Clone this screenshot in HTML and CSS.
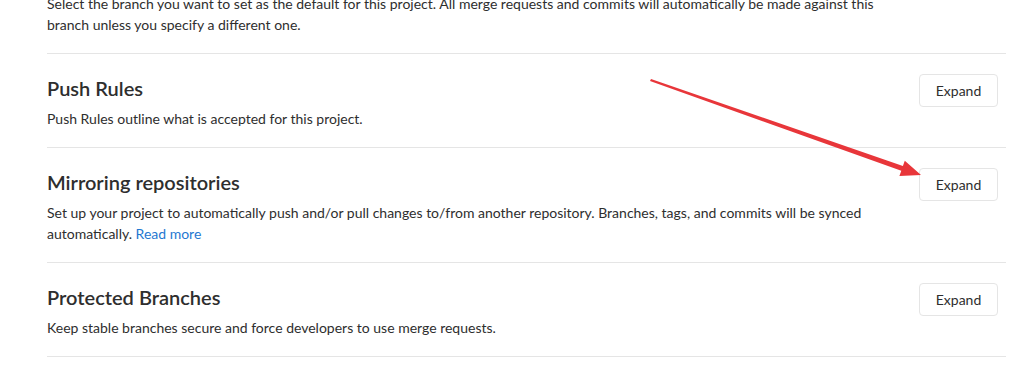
FILE: index.html
```html
<!DOCTYPE html>
<html>
<head>
    <title>Repository Settings</title>
    <link rel="stylesheet" href="styles.css">
</head>
<body>
    <div id="contenedor">
        <section class="seccion seccion-previa">
            <p class="descripcion">Select the branch you want to set as the default for this project. All merge requests and commits will automatically be made against this branch unless you specify a different one.</p>
        </section>
        <section class="seccion">
            <div class="cabecera">
                <h4>Push Rules</h4>
                <button class="btn-expandir">Expand</button>
            </div>
            <p class="descripcion">Push Rules outline what is accepted for this project.</p>
        </section>
        <section class="seccion">
            <div class="cabecera">
                <h4>Mirroring repositories</h4>
                <button class="btn-expandir">Expand</button>
            </div>
            <p class="descripcion">Set up your project to automatically push and/or pull changes to/from another repository. Branches, tags, and commits will be synced automatically. <a href="#">Read more</a></p>
        </section>
        <section class="seccion">
            <div class="cabecera">
                <h4>Protected Branches</h4>
                <button class="btn-expandir">Expand</button>
            </div>
            <p class="descripcion">Keep stable branches secure and force developers to use merge requests.</p>
        </section>
    </div>
    <svg class="flecha" width="1016" height="374" viewBox="0 0 1016 374">
        <polygon points="651,79 902.9,166 904.8,160.8 921,175 899.4,176 901.3,170.8 650,81" fill="#e8363a"/>
    </svg>
</body>
</html>
```

FILE: styles.css
```css
body {
    font-family: Lato, "Liberation Sans", sans-serif;
    font-size: 14px;
    color: #2e2e2e;
    background-color: #ffffff;
    margin: 0;
}
#contenedor {
    margin-left: 47px;
    width: 959px;
    margin-top: -7px;
}
.seccion {
    border-bottom: 1px solid #e5e5e5;
    padding: 20px 0 18px 0;
}
.seccion-previa {
    padding: 0 0 18px 0;
}
.cabecera {
    display: flex;
    justify-content: space-between;
    align-items: center;
    height: 33px;
    padding-right: 8px;
}
h4 {
    font-size: 20px;
    font-weight: 600;
    margin: 0 0 5px 0;
    color: #2e2e2e;
}
.descripcion {
    margin: 1px 0 0 0;
    line-height: 21px;
    max-width: 840px;
}
.seccion-previa .descripcion {
    margin: 0;
}
.descripcion a {
    color: #1f78d1;
    text-decoration: none;
}
.btn-expandir {
    font-family: inherit;
    font-size: 14px;
    color: #2e2e2e;
    background-color: #ffffff;
    border: 1px solid #e5e5e5;
    border-radius: 4px;
    width: 79px;
    height: 33px;
    padding: 0;
}
.flecha {
    position: absolute;
    left: 0;
    top: 0;
    pointer-events: none;
}
```
